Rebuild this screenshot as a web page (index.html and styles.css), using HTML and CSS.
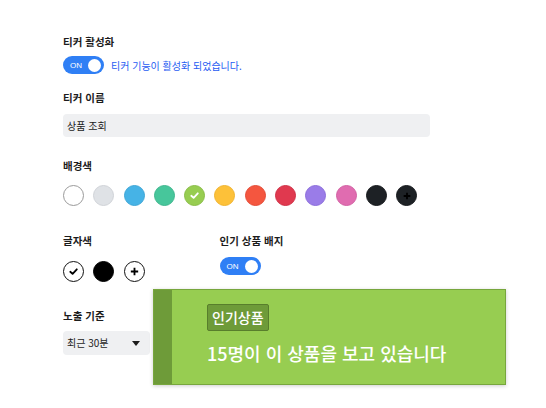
FILE: index.html
```html
<!DOCTYPE html>
<html lang="ko">
<head>
    <meta charset="UTF-8">
    <meta name="viewport" content="width=device-width, initial-scale=1.0">
    <title>티커 설정</title>
    <link rel="stylesheet" href="styles.css">
</head>
<body>
    <div class="settings">
        <div class="field field-active">
            <div class="label">티커 활성화</div>
            <div class="toggle-row">
                <span class="toggle"><span class="toggle-text">ON</span><span class="knob"></span></span>
                <span class="notice">티커 기능이 활성화 되었습니다.</span>
            </div>
        </div>

        <div class="field field-name">
            <div class="label">티커 이름</div>
            <div class="input">상품 조회</div>
        </div>

        <div class="field field-bg">
            <div class="label">배경색</div>
            <div class="swatches">
                <span class="swatch" style="background:#ffffff;border-color:#9a9a9a"></span>
                <span class="swatch" style="background:#dfe2e6;border-color:#d0d3d8"></span>
                <span class="swatch" style="background:#46b3e6;border-color:#3fa6d6"></span>
                <span class="swatch" style="background:#47c69b;border-color:#3fb68e"></span>
                <span class="swatch" style="background:#97cd51;border-color:#8abd48">
                    <svg viewBox="0 0 12 12" width="11" height="11"><path d="M2.5 6.3 L5 8.6 L9.6 3.6" fill="none" stroke="#fff" stroke-width="2" stroke-linecap="round" stroke-linejoin="round"/></svg>
                </span>
                <span class="swatch" style="background:#fdc139;border-color:#f0b430"></span>
                <span class="swatch" style="background:#f4563f;border-color:#e44b36"></span>
                <span class="swatch" style="background:#e0394f;border-color:#d03046"></span>
                <span class="swatch" style="background:#9a7ce8;border-color:#8c6edb"></span>
                <span class="swatch" style="background:#e06cb0;border-color:#d260a3"></span>
                <span class="swatch" style="background:#1d2125;border-color:#15181b"></span>
                <span class="swatch" style="background:#1d2125;border-color:#15181b">
                    <svg viewBox="0 0 12 12" width="10" height="10"><path d="M6 2 V10 M2 6 H10" stroke="#000" stroke-width="2.2"/></svg>
                </span>
            </div>
        </div>

        <div class="field-row">
            <div class="field">
                <div class="label">글자색</div>
                <div class="swatches">
                    <span class="swatch outline">
                        <svg viewBox="0 0 12 12" width="11" height="11"><path d="M2.5 6.3 L5 8.6 L9.6 3.6" fill="none" stroke="#000" stroke-width="2" stroke-linecap="round" stroke-linejoin="round"/></svg>
                    </span>
                    <span class="swatch" style="background:#000;border-color:#000"></span>
                    <span class="swatch outline">
                        <svg viewBox="0 0 12 12" width="11" height="11"><path d="M6 2 V10 M2 6 H10" stroke="#000" stroke-width="2"/></svg>
                    </span>
                </div>
            </div>
            <div class="field field-badge">
                <div class="label">인기 상품 배지</div>
                <span class="toggle"><span class="toggle-text">ON</span><span class="knob"></span></span>
            </div>
        </div>

        <div class="field field-sort">
            <div class="label">노출 기준</div>
            <div class="select">최근 30분 <span class="caret"></span></div>
        </div>
    </div>

    <div class="preview">
        <div class="preview-bar"></div>
        <div class="preview-body">
            <span class="badge">인기상품</span>
            <div class="preview-text">15명이 이 상품을 보고 있습니다</div>
        </div>
    </div>
</body>
</html>
```

FILE: styles.css
```css
* {
    box-sizing: border-box;
}

body {
    margin: 0;
    padding: 34px 0 0 63px;
    background: #fff;
    font-family: "Noto Sans CJK KR", "Noto Sans", sans-serif;
    color: #1c1c1c;
    position: relative;
    height: 408px;
}

.label {
    font-size: 10.5px;
    font-weight: bold;
    line-height: 16px;
    margin-bottom: 6px;
}

.field-active {
    margin-bottom: 16px;
}

.field-name {
    margin-bottom: 21px;
}

.field-name .label {
    margin-bottom: 8px;
}

.field-bg {
    margin-bottom: 27px;
}

.field-bg .label {
    margin-bottom: 11px;
}

.toggle-row {
    display: flex;
    align-items: center;
    gap: 7px;
}

.toggle {
    display: inline-flex;
    align-items: center;
    justify-content: space-between;
    width: 41px;
    height: 18px;
    border-radius: 9px;
    background: #2f7ff5;
    padding: 0 3px 0 7px;
}

.field-badge .toggle {
    display: flex;
}

.toggle-text {
    color: #fff;
    font-size: 8px;
    font-family: "Liberation Sans", sans-serif;
}

.knob {
    width: 13px;
    height: 13px;
    border-radius: 50%;
    background: #fff;
}

.notice {
    color: #1f5cf2;
    font-size: 10px;
}

.input {
    width: 367px;
    height: 23px;
    background: #eff0f2;
    border-radius: 4px;
    font-size: 10px;
    line-height: 23px;
    padding-left: 4px;
}

.swatches {
    display: flex;
    gap: 9.3px;
}

.swatch {
    width: 21px;
    height: 21px;
    border-radius: 50%;
    border: 1px solid #999;
    display: flex;
    align-items: center;
    justify-content: center;
}

.swatch.outline {
    background: #fff;
    border-color: #111;
}

.field-row {
    display: flex;
    gap: 75px;
    margin-bottom: 26px;
}

.field-row .label {
    margin-bottom: 12px;
}

.field-row .field-badge .label {
    margin-bottom: 8px;
}

.field-sort .label {
    margin-bottom: 7px;
}

.select {
    width: 87px;
    height: 24px;
    background: #eff0f2;
    border-radius: 4px;
    font-size: 10px;
    line-height: 24px;
    padding: 0 10px 0 4px;
    display: flex;
    justify-content: space-between;
    align-items: center;
}

.caret {
    width: 0;
    height: 0;
    border-left: 4px solid transparent;
    border-right: 4px solid transparent;
    border-top: 5px solid #1c1c1c;
}

.preview {
    position: absolute;
    left: 153px;
    top: 289px;
    width: 353px;
    height: 96px;
    display: flex;
    border: 1px solid #77a63d;
    background: #97cd51;
    box-shadow: 0 1px 4px rgba(0, 0, 0, 0.2);
}

.preview-bar {
    width: 18px;
    background: #6e9b39;
}

.preview-body {
    padding: 14px 0 0 35px;
}

.badge {
    display: inline-block;
    background: #6e9b39;
    border: 1px solid #587e2c;
    border-radius: 2px;
    color: #fff;
    font-size: 14px;
    font-weight: 500;
    line-height: 25px;
    padding: 0 4px;
}

.preview-text {
    color: #fff;
    font-size: 18px;
    font-weight: 500;
    margin-top: 9px;
}
```
